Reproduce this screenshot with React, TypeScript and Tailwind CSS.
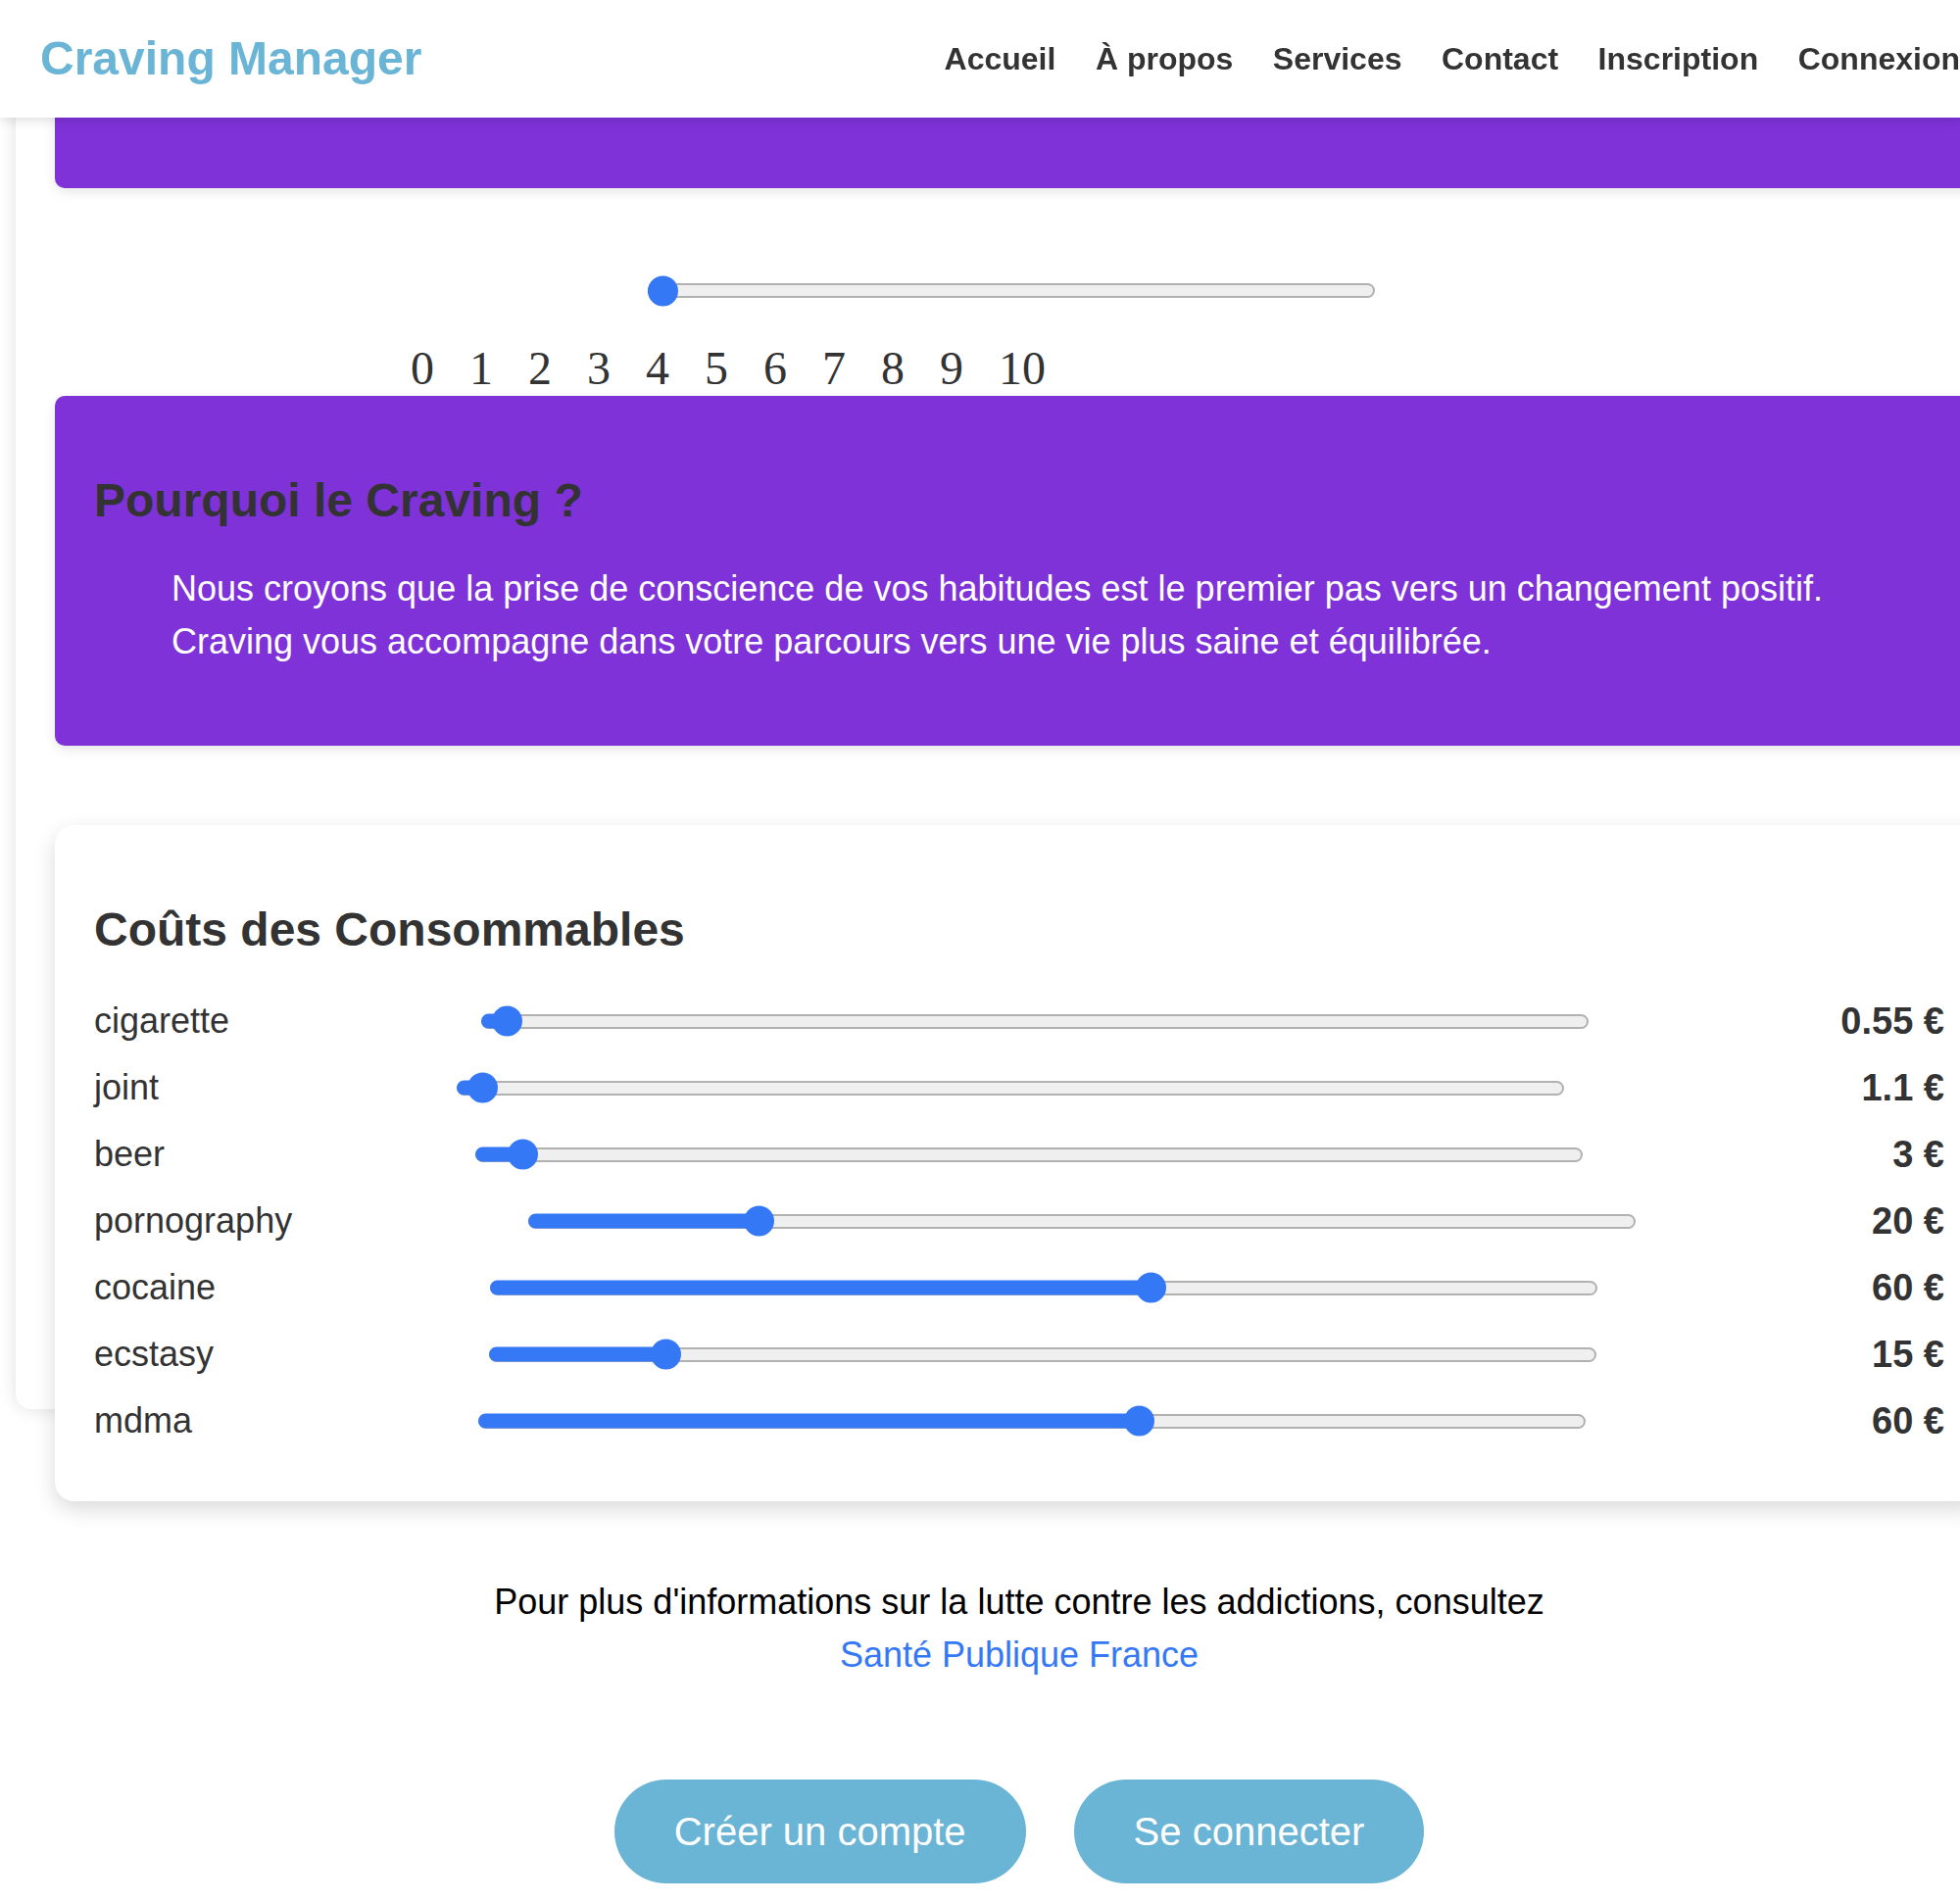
import React from "react";

const navLinks = ["Accueil", "À propos", "Services", "Contact", "Inscription", "Connexion"];

// valeurs en euros, curseurs de 0 à 100 avec un pas de 1
const costs = [
    { name: "cigarette", value: 0.55, label: "0.55 €" },
    { name: "joint", value: 1.1, label: "1.1 €" },
    { name: "beer", value: 3, label: "3 €" },
    { name: "pornography", value: 20, label: "20 €" },
    { name: "cocaine", value: 60, label: "60 €" },
    { name: "ecstasy", value: 15, label: "15 €" },
    { name: "mdma", value: 60, label: "60 €" },
];

const Range = ({ width, pct, className }: { width: number; pct: number; className: string }) => {
    const thumb = 31;
    const pos = (width - thumb) * pct;
    return (
        <div className={`relative flex h-[31px] shrink-0 items-center ${className}`}>
            <div className="h-[15px] w-full rounded-full border-2 border-[#b1b1b1] bg-[#efefef]" />
            <div
                className="absolute left-0 top-1/2 h-[15px] -translate-y-1/2 rounded-full bg-[#3478f6]"
                style={{ width: pos + thumb / 2 }}
            />
            <div
                className="absolute top-1/2 h-[31px] w-[31px] -translate-y-1/2 rounded-full bg-[#3478f6]"
                style={{ left: pos }}
            />
        </div>
    );
};

export default function App() {
    return (
        <div className="relative w-full overflow-hidden bg-white pb-[20px] font-['Liberation_Sans',Arial,Helvetica,sans-serif] text-[#333]">
            {/* Barre de navigation */}
            <header className="fixed left-0 right-0 top-0 z-20 flex h-[120px] items-center bg-white pl-[41px] shadow-[0_2px_12px_rgba(0,0,0,0.14)]">
                <span className="text-[48px] font-bold text-[#6ab4d6]">Craving Manager</span>
                <nav className="ml-auto flex gap-[40.5px] text-[32px] font-bold text-[#333]">
                    {navLinks.map((l) => (
                        <a key={l} className="whitespace-nowrap">{l}</a>
                    ))}
                </nav>
            </header>

            <div className="w-[2080px]">
                <div className="ml-[16px] h-[1438px] w-[2048px] rounded-[16px] bg-white px-[40px] pt-[40px] shadow-[0_0_18px_rgba(0,0,0,0.13)]">
                    <div className="h-[152px] rounded-[10px] bg-[#7e32d8] shadow-[0_4px_12px_rgba(0,0,0,0.1)]" />

                    {/* Échelle du craving */}
                    <div className="ml-[605px] mt-[89px]">
                        <Range width={742} pct={0} className="w-[742px]" />
                    </div>
                    <div className="ml-[363px] mt-[37px] flex gap-[36px] font-['Liberation_Serif',serif] text-[48px] leading-[53px] text-[#333]">
                        {[0, 1, 2, 3, 4, 5, 6, 7, 8, 9, 10].map((n) => (
                            <span key={n}>{n}</span>
                        ))}
                    </div>

                    <div className="mt-[2px] rounded-[10px] bg-[#7e32d8] px-[40px] pb-[79px] pt-[40px] shadow-[0_4px_12px_rgba(0,0,0,0.1)]">
                        <h2 className="mb-[36px] mt-[40px] text-[48px] font-bold leading-[54px] text-[#333]">
                            Pourquoi le Craving ?
                        </h2>
                        <p className="pl-[79px] text-[36px] leading-[54px] text-white">
                            Nous croyons que la prise de conscience de vos habitudes est le premier pas vers un changement positif.
                            <br />
                            Craving vous accompagne dans votre parcours vers une vie plus saine et équilibrée.
                        </p>
                    </div>

                    {/* Coûts */}
                    <div className="relative mt-[81px] rounded-[20px] bg-white px-[40px] pb-[40px] pt-[40px] shadow-[0_8px_22px_rgba(0,0,0,0.15)]">
                        <h2 className="mb-[40px] mt-[40px] text-[48px] font-bold leading-[54px] text-[#333]">
                            Coûts des Consommables
                        </h2>
                        {costs.map((c) => (
                            <div key={c.name} className="mb-[16px] flex h-[52px] items-center justify-between">
                                <span className="text-[36px] text-[#333]">{c.name}</span>
                                <Range width={1130} pct={Math.round(c.value) / 100} className="w-[1130px]" />
                                <span className="text-[38px] font-bold text-[#333]">{c.label}</span>
                            </div>
                        ))}
                    </div>
                </div>

                <p className="mt-[170px] text-center text-[36px] leading-[54px] text-black">
                    Pour plus d'informations sur la lutte contre les addictions, consultez
                    <br />
                    <a className="text-[#3478f6]">Santé Publique France</a>
                </p>

                <div className="mt-[100px] flex justify-center gap-[49px]">
                    <button className="rounded-full bg-[#6ab4d6] px-[61px] py-[30px] text-[40px] leading-[46px] text-white">
                        Créer un compte
                    </button>
                    <button className="rounded-full bg-[#6ab4d6] px-[61px] py-[30px] text-[40px] leading-[46px] text-white">
                        Se connecter
                    </button>
                </div>
            </div>
        </div>
    );
}
